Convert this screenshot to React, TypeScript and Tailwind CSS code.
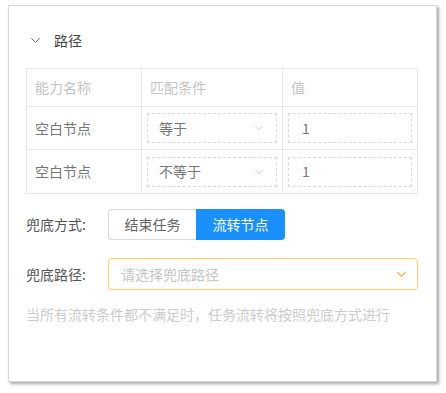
import { ChevronDown } from 'lucide-react';

const rows = [
  { name: '空白节点', op: '等于', value: '1' },
  { name: '空白节点', op: '不等于', value: '1' },
];

export default function App() {
  return (
    <div
      className="w-[446px] h-[393px] bg-white pt-[5px] pl-[8px]"
      style={{ fontFamily: '"Noto Sans CJK SC", "Noto Sans", sans-serif' }}
    >
      <div className="w-[429px] h-[377px] border border-[#d9d9d9] bg-white shadow-[2px_2px_3px_rgba(0,0,0,0.35)] px-[17px] pt-[23px]">
        {/* Header */}
        <div className="flex items-center h-[22px] gap-[11px] pl-[2px]">
          <ChevronDown size={15} strokeWidth={1.5} className="text-[#555]" />
          <span className="text-[14px] text-[#444]">路径</span>
        </div>

        {/* Table */}
        <div className="mt-[17px] w-[392px] border border-[#e8e8e8] text-[14px]">
          <div className="grid grid-cols-[115px_141px_1fr] h-[38px] border-b border-[#e8e8e8] text-[#c4c4c4]">
            <div className="flex items-center px-[8px] border-r border-[#e8e8e8]">能力名称</div>
            <div className="flex items-center px-[8px] border-r border-[#e8e8e8]">匹配条件</div>
            <div className="flex items-center px-[8px]">值</div>
          </div>
          {rows.map((r, i) => (
            <div
              key={i}
              className={`grid grid-cols-[115px_141px_1fr] h-[43px] ${i === 0 ? 'border-b border-[#e8e8e8]' : ''}`}
            >
              <div className="flex items-center px-[8px] border-r border-[#e8e8e8] text-[#777]">{r.name}</div>
              <div className="flex items-center px-[5px] border-r border-[#e8e8e8]">
                <div className="flex-1 h-[30px] border border-dashed border-[#d9d9d9] flex items-center justify-between pl-[11px] pr-[10px] text-[#777]">
                  <span>{r.op}</span>
                  <ChevronDown size={14} strokeWidth={1.2} className="text-[#bbb]" />
                </div>
              </div>
              <div className="flex items-center px-[5px]">
                <div className="flex-1 h-[30px] border border-dashed border-[#d9d9d9] flex items-center pl-[13px] text-[#777]">
                  {r.value}
                </div>
              </div>
            </div>
          ))}
        </div>

        {/* Fallback mode */}
        <div className="mt-[15px] flex items-center text-[14px]">
          <span className="w-[82px] text-[#555]">兜底方式:</span>
          <div className="flex h-[31px]">
            <div className="w-[88px] border border-[#d9d9d9] border-r-0 rounded-l-[4px] flex items-center justify-center text-[#666]">
              结束任务
            </div>
            <div className="w-[89px] bg-[#1a90ff] rounded-r-[4px] flex items-center justify-center text-white">
              流转节点
            </div>
          </div>
        </div>

        {/* Fallback path */}
        <div className="mt-[18px] flex items-center text-[14px]">
          <span className="w-[82px] text-[#555]">兜底路径:</span>
          <div className="w-[310px] h-[32px] border border-[#ffcc66] rounded-[4px] flex items-center justify-between pl-[12px] pr-[8px]">
            <span className="text-[#c4c4c4]">请选择兜底路径</span>
            <ChevronDown size={15} strokeWidth={1.8} className="text-[#f5a623]" />
          </div>
        </div>

        <p className="mt-[14px] text-[14px] text-[#cccccc]">
          当所有流转条件都不满足时，任务流转将按照兜底方式进行
        </p>
      </div>
    </div>
  );
}
